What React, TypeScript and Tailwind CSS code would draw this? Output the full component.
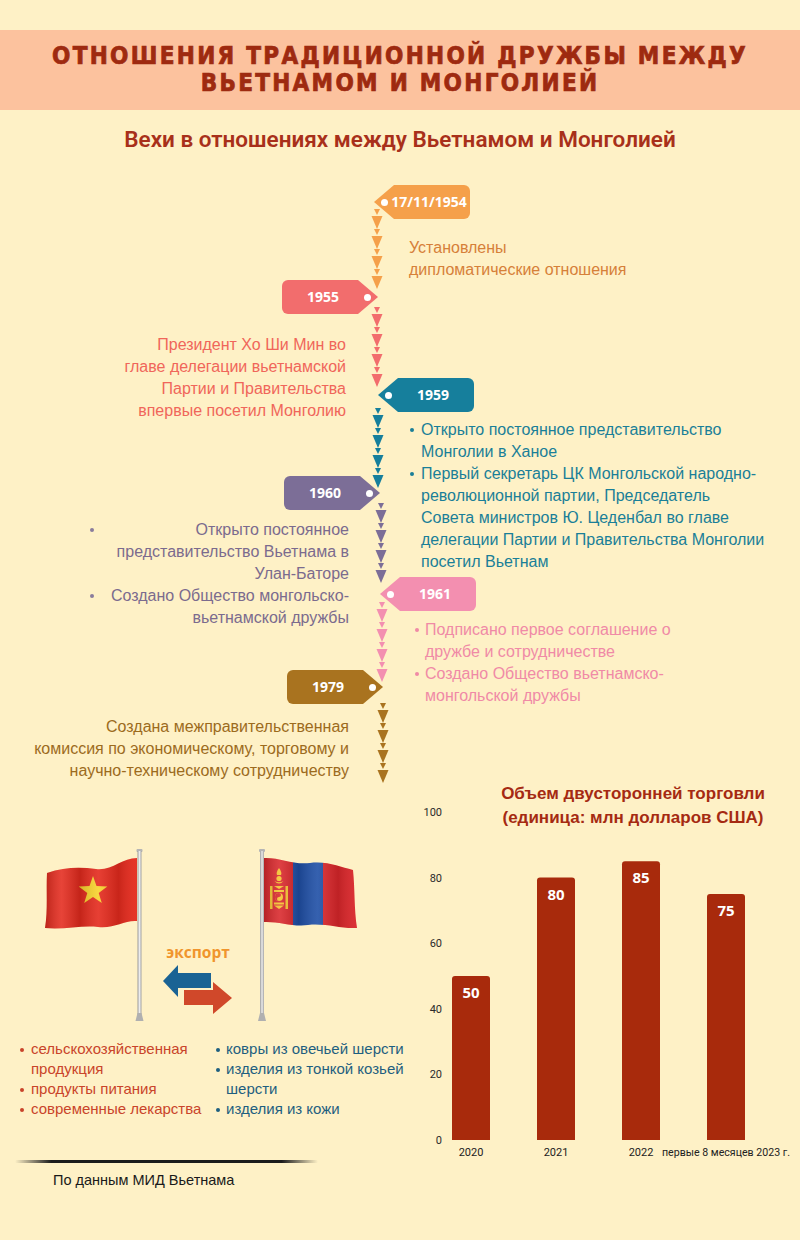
import React from 'react';

// --- timeline pieces ---

type TagProps = { label: string; side: 'left' | 'right'; className: string };

const Tag = ({ label, side, className }: TagProps) => {
    if (side === 'left') {
        return (
            <div className={`relative z-10 flex h-[34px] w-[96px] items-center rounded-r-[6px] [clip-path:polygon(0_50%,20px_0,100%_0,100%_100%,20px_100%)] ${className}`}>
                <span className="ml-[7px] h-[7px] w-[7px] shrink-0 rounded-full bg-white" />
                <span className="flex-1 text-center font-['Open_Sans',sans-serif] text-[14px] font-bold text-white">{label}</span>
            </div>
        );
    }
    return (
        <div className={`relative z-10 flex h-[34px] w-[96px] items-center rounded-l-[6px] [clip-path:polygon(0_0,76px_0,100%_50%,76px_100%,0_100%)] ${className}`}>
            <span className="flex-1 text-center font-['Open_Sans',sans-serif] text-[14px] font-bold text-white">{label}</span>
            <span className="mr-[7px] h-[7px] w-[7px] shrink-0 rounded-full bg-white" />
        </div>
    );
};

// chain of small / big arrow heads running down the axis
const segments = [
    { y0: 29, y1: 110, cx: 5, color: '#f5a04a' },
    { y0: 127, y1: 207, cx: 5, color: '#f26d6d' },
    { y0: 228, y1: 307, cx: 6, color: '#167f9c' },
    { y0: 323, y1: 403, cx: 9, color: '#7c6e97' },
    { y0: 422, y1: 503, cx: 10, color: '#f38fb0' },
    { y0: 523, y1: 604, cx: 11, color: '#a9731f' },
];

const tris = (y0: number, y1: number, cx: number) => {
    const out: string[] = [];
    for (let y = y0; y + 19 <= y1; y += 20) {
        out.push(`${cx - 3},${y} ${cx + 3},${y} ${cx},${y + 6}`);
        out.push(`${cx - 5.5},${y + 7} ${cx + 5.5},${y + 7} ${cx},${y + 20}`);
    }
    return out;
};

const Chain = () => (
    <svg width="16" height="604" viewBox="0 0 16 604" className="overflow-visible">
        {segments.map((s, i) => (
            <g key={i} fill={s.color}>
                {tris(s.y0, s.y1, s.cx).map((p, j) => <polygon key={j} points={p} />)}
            </g>
        ))}
    </svg>
);

// --- flags ---

const starPoints = (cx: number, cy: number, R: number, r: number) => {
    const pts: string[] = [];
    for (let i = 0; i < 10; i++) {
        const a = ((-90 + i * 36) * Math.PI) / 180;
        const rad = i % 2 === 0 ? R : r;
        pts.push(`${(cx + rad * Math.cos(a)).toFixed(1)},${(cy + rad * Math.sin(a)).toFixed(1)}`);
    }
    return pts.join(' ');
};

const Pole = ({ x }: { x: number }) => (
    <g>
        <rect x={x - 1} y="0" width="6" height="3" rx="1" fill="#b5b5b5" />
        <rect x={x} y="2" width="4" height="166" fill="url(#poleGrad)" />
        <path d={`M${x - 2},172 L${x},164 L${x + 4},164 L${x + 6},172 Z`} fill="#b0b0b0" />
    </g>
);

const PoleGrad = () => (
    <linearGradient id="poleGrad" x1="0" x2="1" y1="0" y2="0">
        <stop offset="0" stopColor="#9c9c9c" />
        <stop offset="0.5" stopColor="#ececec" />
        <stop offset="1" stopColor="#a3a3a3" />
    </linearGradient>
);

const Shade = ({ id }: { id: string }) => (
    <linearGradient id={id} x1="0" x2="1" y1="0" y2="0">
        <stop offset="0" stopColor="#000" stopOpacity="0.18" />
        <stop offset="0.18" stopColor="#fff" stopOpacity="0.12" />
        <stop offset="0.38" stopColor="#000" stopOpacity="0.14" />
        <stop offset="0.58" stopColor="#fff" stopOpacity="0.1" />
        <stop offset="0.8" stopColor="#000" stopOpacity="0.12" />
        <stop offset="1" stopColor="#fff" stopOpacity="0.05" />
    </linearGradient>
);

const vnPath = 'M99,9 C84,9 74,22 58,20 C42,18 26,18 9,24 C8,42 10,60 7,79 C26,81 44,76 60,78 C76,80 86,71 99,72 Z';

const VietnamFlag = () => (
    <svg width="108" height="172" viewBox="0 0 108 172">
        <defs>
            <PoleGrad />
            <Shade id="vnShade" />
        </defs>
        <path d={vnPath} fill="#e42a1d" />
        <polygon points={starPoints(55, 42, 15, 6)} fill="#f8d22c" />
        <path d={vnPath} fill="url(#vnShade)" />
        <Pole x={99.5} />
    </svg>
);

const mnPath = 'M13,9 C30,8 42,16 60,14 C78,12 90,18 103,21 C105,40 104,60 107,79 C90,80 76,74 58,76 C42,78 28,72 13,73 Z';

const MongoliaFlag = () => (
    <svg width="110" height="172" viewBox="0 0 110 172">
        <defs>
            <PoleGrad />
            <Shade id="mnShade" />
            <clipPath id="mnClip">
                <path d={mnPath} />
            </clipPath>
        </defs>
        <g clipPath="url(#mnClip)">
            <rect x="0" y="0" width="43" height="100" fill="#d9262a" />
            <rect x="43" y="0" width="30" height="100" fill="#1f4fa6" />
            <rect x="73" y="0" width="40" height="100" fill="#d9262a" />
            <g fill="#f5c22c">
                <path d="M29,19 C27,22 26,24 27,26 L31,26 C32,24 31,22 29,19 Z" />
                <circle cx="29" cy="29.5" r="2.6" />
                <path d="M24.5,32 Q29,37 33.5,32 Q29,34.5 24.5,32 Z" />
                <polygon points="24,37 34,37 29,40" />
                <rect x="24" y="41" width="10" height="2" />
                <circle cx="29" cy="48" r="4" />
                <rect x="24" y="53.5" width="10" height="2" />
                <polygon points="24,56.5 34,56.5 29,60" />
                <rect x="20" y="37" width="2.5" height="23" />
                <rect x="35.5" y="37" width="2.5" height="23" />
            </g>
            <path d="M29,44 a2,2 0 0,1 0,4 a2,2 0 0,0 0,4 a4,4 0 0,1 0,-8 Z" fill="#d9262a" />
            <path d={mnPath} fill="url(#mnShade)" />
        </g>
        <Pole x={10} />
    </svg>
);

const ExportArrows = () => (
    <svg width="70" height="49" viewBox="0 0 70 49">
        <polygon points="0,16 15,0 15,8 48,8 48,23 15,23 15,32" fill="#1a6394" />
        <polygon points="69,33 50,17 50,25 21,25 21,40 50,40 50,49" fill="#d0482a" />
    </svg>
);

// --- chart ---

const trade = [
    { year: '2020', value: 50 },
    { year: '2021', value: 80 },
    { year: '2022', value: 85 },
    { year: 'первые 8 месяцев 2023 г.', value: 75 },
];

const BASE = 356;
const UNIT = 3.28;

const TradeChart = () => (
    <svg width="390" height="400" viewBox="0 0 390 400">
        <g fontFamily="'Liberation Sans', Arial, sans-serif" fontWeight="700" fontSize="17" fill="#a52a12" textAnchor="middle">
            <text x="223" y="15">Объем двусторонней торговли</text>
            <text x="223" y="39">(единица: млн долларов США)</text>
        </g>
        <g fontFamily="Roboto, sans-serif" fontSize="11" fill="#2b2b2b" textAnchor="end">
            {[0, 20, 40, 60, 80, 100].map((v) => (
                <text key={v} x="32" y={BASE - v * UNIT + 4}>{v}</text>
            ))}
        </g>
        {trade.map((d, i) => {
            const x = 42 + i * 85;
            const w = 38;
            const top = BASE - d.value * UNIT;
            return (
                <g key={d.year}>
                    <path
                        d={`M${x},${BASE} V${top + 3} Q${x},${top} ${x + 3},${top} H${x + w - 3} Q${x + w},${top} ${x + w},${top + 3} V${BASE} Z`}
                        fill="#a82a0c"
                    />
                    <text x={x + w / 2} y={top + 22} textAnchor="middle" fontFamily="'Open Sans', sans-serif" fontWeight="700" fontSize="15" fill="#fff">
                        {d.value}
                    </text>
                    {i < 3 ? (
                        <text x={x + w / 2} y="372" textAnchor="middle" fontFamily="Roboto, sans-serif" fontSize="11" fill="#222">{d.year}</text>
                    ) : (
                        <text x="252" y="372" fontFamily="Roboto, sans-serif" fontSize="11" fill="#222" textLength="128" lengthAdjust="spacingAndGlyphs">{d.year}</text>
                    )}
                </g>
            );
        })}
    </svg>
);

const Dot = ({ className }: { className: string }) => (
    <span className={`mt-[9px] h-[4px] w-[4px] shrink-0 rounded-full ${className}`} />
);

export default function App() {
    return (
        <div className="h-[1240px] w-[800px] overflow-hidden bg-[#fef1c6] font-['Liberation_Sans',Arial,sans-serif]">
            <div className="h-[30px]" />
            <header className="flex h-[80px] items-center justify-center bg-[#fcc29e]">
                <h1 className="text-center font-['DejaVu_Sans_Condensed','DejaVu_Sans',sans-serif] text-[24px] font-bold leading-[27px] tracking-[2.3px] text-[#9e2a10] [-webkit-text-stroke:0.7px_#9e2a10]">
                    ОТНОШЕНИЯ ТРАДИЦИОННОЙ ДРУЖБЫ МЕЖДУ
                    <br />
                    ВЬЕТНАМОМ И МОНГОЛИЕЙ
                </h1>
            </header>
            <div className="flex h-[70px] items-center justify-center pb-[10px]">
                <h2 className="font-['Roboto',sans-serif] text-[22.5px] font-semibold text-[#a8301a]">Вехи в отношениях между Вьетнамом и Монголией</h2>
            </div>

            {/* timeline */}
            <div className="grid h-[604px] grid-cols-[372px_16px_1fr] whitespace-nowrap text-[16px] leading-[22px]">
                <div className="flex flex-col items-end">
                    <Tag side="right" label="1955" className="mt-[100px] -mr-[6px] bg-[#f26d6d]" />
                    <p className="mt-[20px] mr-[26px] text-right text-[#f0665a]">
                        Президент Хо Ши Мин во
                        <br />
                        главе делегации вьетнамской
                        <br />
                        Партии и Правительства
                        <br />
                        впервые посетил Монголию
                    </p>
                    <Tag side="right" label="1960" className="mt-[54px] -mr-[8px] bg-[#7c6e97]" />
                    <ul className="mt-[9px] mr-[23px] w-[265px] pl-[6px] text-[#7b6b8e]">
                        <li className="flex">
                            <Dot className="bg-[#8a7c9c]" />
                            <span className="flex-1 text-right">
                                Открыто постоянное
                                <br />
                                представительство Вьетнама в
                                <br />
                                Улан-Баторе
                            </span>
                        </li>
                        <li className="flex">
                            <Dot className="bg-[#8a7c9c]" />
                            <span className="flex-1 text-right">
                                Создано Общество монгольско-
                                <br />
                                вьетнамской дружбы
                            </span>
                        </li>
                    </ul>
                    <Tag side="right" label="1979" className="mt-[41px] -mr-[11px] bg-[#a9731f]" />
                    <p className="mt-[12px] mr-[23px] text-right text-[#9c6b1d]">
                        Создана межправительственная
                        <br />
                        комиссия по экономическому, торговому и
                        <br />
                        научно-техническому сотрудничеству
                    </p>
                </div>

                <Chain />

                <div className="flex flex-col items-start">
                    <Tag side="left" label="17/11/1954" className="mt-[5px] -ml-[14px] bg-[#f5a04a]" />
                    <p className="mt-[18px] ml-[21px] text-[#d68039]">
                        Установлены
                        <br />
                        дипломатические отношения
                    </p>
                    <Tag side="left" label="1959" className="mt-[97px] -ml-[10px] bg-[#167f9c]" />
                    <ul className="mt-[7px] ml-[22px] text-[#1a7f98]">
                        <li className="flex gap-[7px]">
                            <Dot className="bg-[#1a7f98]" />
                            <span>
                                Открыто постоянное представительство
                                <br />
                                Монголии в Ханое
                            </span>
                        </li>
                        <li className="flex gap-[7px]">
                            <Dot className="bg-[#1a7f98]" />
                            <span>
                                Первый секретарь ЦК Монгольской народно-
                                <br />
                                революционной партии, Председатель
                                <br />
                                Совета министров Ю. Цеденбал во главе
                                <br />
                                делегации Партии и Правительства Монголии
                                <br />
                                посетил Вьетнам
                            </span>
                        </li>
                    </ul>
                    <Tag side="left" label="1961" className="mt-[4px] -ml-[8px] bg-[#f38fb0]" />
                    <ul className="mt-[8px] ml-[27px] text-[#f08aa6]">
                        <li className="flex gap-[6px]">
                            <Dot className="bg-[#f08aa6]" />
                            <span>
                                Подписано первое соглашение о
                                <br />
                                дружбе и сотрудничестве
                            </span>
                        </li>
                        <li className="flex gap-[6px]">
                            <Dot className="bg-[#f08aa6]" />
                            <span>
                                Создано Общество вьетнамско-
                                <br />
                                монгольской дружбы
                            </span>
                        </li>
                    </ul>
                </div>
            </div>

            {/* exports + trade */}
            <div className="grid grid-cols-[410px_390px]">
                <div className="pt-[65px]">
                    <div className="flex pl-[38px]">
                        <VietnamFlag />
                        <div className="flex w-[104px] flex-col items-center pt-[94px]">
                            <span className="font-['Open_Sans',sans-serif] text-[15.5px] font-bold leading-[18px] text-[#f0952c]">экспорт</span>
                            <div className="mt-[4px]">
                                <ExportArrows />
                            </div>
                        </div>
                        <MongoliaFlag />
                    </div>
                    <div className="mt-[18px] grid grid-cols-[196px_1fr] whitespace-nowrap pl-[20px] text-[15px] leading-[20px]">
                        <ul className="text-[#c9442a]">
                            <li className="flex gap-[7px]">
                                <Dot className="bg-[#c9442a]" />
                                <span>
                                    сельскохозяйственная
                                    <br />
                                    продукция
                                </span>
                            </li>
                            <li className="flex gap-[7px]">
                                <Dot className="bg-[#c9442a]" />
                                <span>продукты питания</span>
                            </li>
                            <li className="flex gap-[7px]">
                                <Dot className="bg-[#c9442a]" />
                                <span>современные лекарства</span>
                            </li>
                        </ul>
                        <ul className="text-[#1e5f80]">
                            <li className="flex gap-[6px]">
                                <Dot className="bg-[#1e5f80]" />
                                <span>ковры из овечьей шерсти</span>
                            </li>
                            <li className="flex gap-[6px]">
                                <Dot className="bg-[#1e5f80]" />
                                <span>
                                    изделия из тонкой козьей
                                    <br />
                                    шерсти
                                </span>
                            </li>
                            <li className="flex gap-[6px]">
                                <Dot className="bg-[#1e5f80]" />
                                <span>изделия из кожи</span>
                            </li>
                        </ul>
                    </div>
                    <div className="mt-[41px] ml-[15px] h-[3px] w-[303px] rounded-full bg-[linear-gradient(to_right,transparent,#1c1c1c_12%,#1c1c1c_88%,transparent)]" />
                    <p className="mt-[8px] ml-[53px] text-[14.5px] leading-[18px] text-[#1a1a1a]">По данным МИД Вьетнама</p>
                </div>
                <div>
                    <TradeChart />
                </div>
            </div>
        </div>
    );
}
